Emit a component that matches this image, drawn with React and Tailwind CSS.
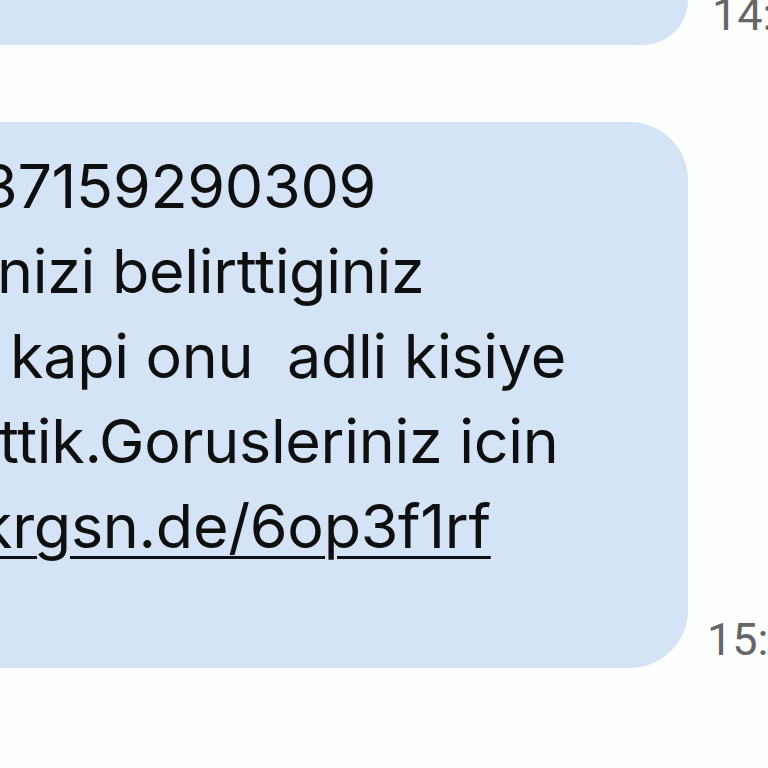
export default function App() {
  const lines = [
    { t: "37159290309", ml: "-ml-[20px]" },
    { t: "nizi belirttiginiz", ml: "-ml-[3px]" },
    { t: "kapi onu  adli kisiye", ml: "ml-[10px]" },
    { t: "ttik.Gorusleriniz icin", ml: "-ml-[1px]" },
  ];
  return (
    <div className="w-[768px] h-[768px] overflow-hidden bg-[#fdfefe] font-['Inter',sans-serif]">
      <div className="flex items-end h-[45px]">
        <div className="w-[688px] h-[45px] bg-[#d4e3f5] rounded-br-[48px] shrink-0" />
        <div className="ml-[24px] mb-[15px] text-[45px] leading-[30px] text-[#666666] font-['Roboto',sans-serif] whitespace-nowrap">
          14:
        </div>
      </div>
      <div className="flex items-end mt-[77px]">
        <div className="w-[688px] h-[546px] bg-[#d4e3f5] rounded-r-[58px] shrink-0 pt-[22px] text-[61px] leading-[85px] text-[#0f0f0f] tracking-[-0.3px] whitespace-pre">
          {lines.map((l, i) => (
            <div key={i} className={l.ml}>
              {l.t}
            </div>
          ))}
          <div className="-ml-[21px]">
            <span className="underline decoration-[3px] underline-offset-[8px]">krgsn.de/6op3f1rf</span>
          </div>
        </div>
        <div className="ml-[19px] mb-[13px] text-[45px] leading-[30px] text-[#666666] font-['Roboto',sans-serif] whitespace-nowrap">
          15:
        </div>
      </div>
    </div>
  );
}
